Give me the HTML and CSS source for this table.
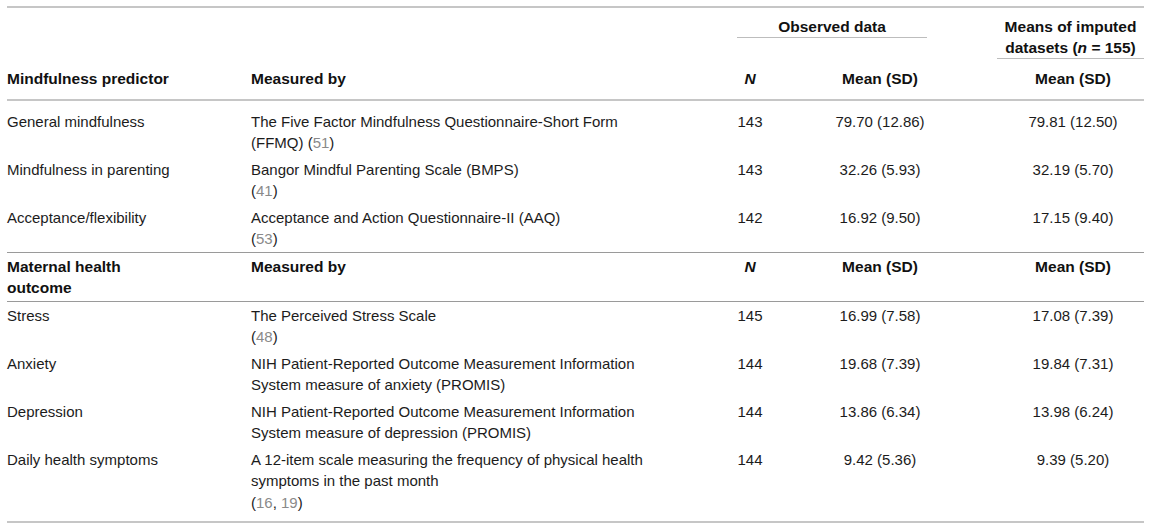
FILE: index.html
```html
<!DOCTYPE html>
<html lang="en">
<head>
  <meta charset="UTF-8" />
  <meta name="viewport" content="width=device-width, initial-scale=1.0"/>
  <title>Mindfulness predictors and maternal health outcomes</title>
  <link rel="stylesheet" href="styles.css">
</head>
<body>
  <table class="data-table">
    <colgroup>
      <col class="col-name">
      <col class="col-measure">
      <col class="col-n">
      <col class="col-mean">
      <col class="col-imp">
    </colgroup>

    <thead>
      <tr class="group-row">
        <th colspan="2"></th>
        <th colspan="2" class="group-obs"><div class="group-label">Observed data</div></th>
        <th class="group-imp"><div class="group-label">Means of imputed datasets (<i>n</i> = 155)</div></th>
      </tr>
      <tr class="label-row">
        <th class="name">Mindfulness predictor</th>
        <th class="measure">Measured by</th>
        <th class="num"><i>N</i></th>
        <th class="mean">Mean (SD)</th>
        <th class="imp">Mean (SD)</th>
      </tr>
    </thead>

    <!-- Mindfulness predictors -->
    <tbody class="section first">
      <tr>
        <td class="name">General mindfulness</td>
        <td class="measure">The Five Factor Mindfulness Questionnaire-Short Form (FFMQ) (<a href="#">51</a>)</td>
        <td class="num">143</td>
        <td class="mean">79.70 (12.86)</td>
        <td class="imp">79.81 (12.50)</td>
      </tr>
      <tr>
        <td class="name">Mindfulness in parenting</td>
        <td class="measure">Bangor Mindful Parenting Scale (BMPS)<br>(<a href="#">41</a>)</td>
        <td class="num">143</td>
        <td class="mean">32.26 (5.93)</td>
        <td class="imp">32.19 (5.70)</td>
      </tr>
      <tr>
        <td class="name">Acceptance/flexibility</td>
        <td class="measure">Acceptance and Action Questionnaire-II (AAQ)<br>(<a href="#">53</a>)</td>
        <td class="num">142</td>
        <td class="mean">16.92 (9.50)</td>
        <td class="imp">17.15 (9.40)</td>
      </tr>
    </tbody>

    <!-- Maternal health outcomes -->
    <tbody class="section last">
      <tr class="sub-head">
        <th class="name">Maternal health<br>outcome</th>
        <th class="measure">Measured by</th>
        <th class="num"><i>N</i></th>
        <th class="mean">Mean (SD)</th>
        <th class="imp">Mean (SD)</th>
      </tr>
      <tr>
        <td class="name">Stress</td>
        <td class="measure">The Perceived Stress Scale<br>(<a href="#">48</a>)</td>
        <td class="num">145</td>
        <td class="mean">16.99 (7.58)</td>
        <td class="imp">17.08 (7.39)</td>
      </tr>
      <tr>
        <td class="name">Anxiety</td>
        <td class="measure">NIH Patient-Reported Outcome Measurement Information System measure of anxiety (PROMIS)</td>
        <td class="num">144</td>
        <td class="mean">19.68 (7.39)</td>
        <td class="imp">19.84 (7.31)</td>
      </tr>
      <tr>
        <td class="name">Depression</td>
        <td class="measure">NIH Patient-Reported Outcome Measurement Information System measure of depression (PROMIS)</td>
        <td class="num">144</td>
        <td class="mean">13.86 (6.34)</td>
        <td class="imp">13.98 (6.24)</td>
      </tr>
      <tr>
        <td class="name">Daily health symptoms</td>
        <td class="measure">A 12-item scale measuring the frequency of physical health symptoms in the past month<br>(<a href="#">16</a>, <a href="#">19</a>)</td>
        <td class="num">144</td>
        <td class="mean">9.42 (5.36)</td>
        <td class="imp">9.39 (5.20)</td>
      </tr>
    </tbody>
  </table>
</body>
</html>
```

FILE: styles.css
```css
/************************************************************************
 *  GLOBAL
 ************************************************************************/
* {
  margin: 0;
  padding: 0;
  box-sizing: border-box;
}
html, body {
  background: #fff;
  font-family: 'Liberation Sans', Arial, Helvetica, sans-serif;
  color: #1c1c1c;
}
body {
  padding: 6px 7px;
}

/************************************************************************
 *  TABLE
 ************************************************************************/
.data-table {
  width: 1137px;
  table-layout: fixed;
  border-collapse: separate;
  border-spacing: 0;
  font-size: 15px;
  line-height: 21.5px;
}
.col-name    { width: 244px; }
.col-measure { width: 476px; }
.col-n       { width: 46px; }
.col-mean    { width: 224px; }
.col-imp     { width: 147px; }

.data-table th,
.data-table td {
  text-align: left;
  vertical-align: top;
  padding: 3px 0 2px;
}
.data-table th {
  font-size: 15.5px;
  font-weight: 700;
  color: #111;
}
.data-table .measure { padding-right: 66px; }
.data-table .num     { text-align: center; }
.data-table .mean    { text-align: center; padding-right: 10px; }
.data-table .imp     { text-align: center; padding-left: 5px; }

.data-table a {
  color: #8a8a8a;
  text-decoration: none;
}

/************************************************************************
 *  HEADER
 ************************************************************************/
.group-row th {
  border-top: 2px solid #c6c6c6;
  padding: 8px 0 0;
  line-height: 21px;
}
.group-row .group-obs {
  padding-left: 10px;
  padding-right: 70px;
}
.group-label {
  text-align: center;
  border-bottom: 1px solid #bdbdbd;
}
.label-row th {
  padding: 9px 0 9px;
  border-bottom: 2px solid #c6c6c6;
}
.label-row th.measure { padding-right: 66px; }
.label-row th.mean    { padding-right: 10px; }
.label-row th.imp     { padding-left: 5px; }

/************************************************************************
 *  BODY SECTIONS
 ************************************************************************/
.section.first tr:first-child td {
  padding-top: 10px;
}
.section.first tr:last-child td {
  border-bottom: 1px solid #9a9a9a;
}
.sub-head th {
  border-bottom: 1px solid #9a9a9a;
}
.section.last tr:last-child td {
  padding-bottom: 8px;
  border-bottom: 2px solid #c6c6c6;
}
```
